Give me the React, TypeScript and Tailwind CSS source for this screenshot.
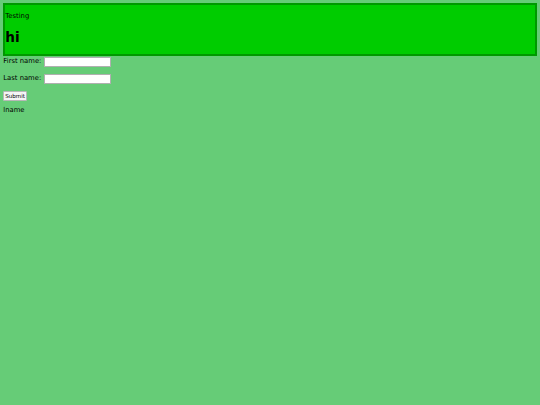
export default function App() {
  return (
    <div
      className="min-h-screen bg-[#66cc77] px-[3.33px] pt-[3.33px] text-[6.8px] leading-[7.8px] text-black"
      style={{ fontFamily: '"DejaVu Sans", sans-serif' }}
    >
      <div className="border-2 border-[#009900] bg-[#00cc00]">
        <p className="mt-[7.3px] mb-[6.67px]">Testing</p>
        <h1 className="my-[9.2px] text-[13.6px] font-bold leading-[15.5px]">hi</h1>
      </div>
      <form>
        <div className="mt-[0.5px] flex h-[10px] items-center gap-[3px]">
          <label htmlFor="fname">First name:</label>
          <input id="fname" type="text" className="h-[9.5px] w-[67px] border border-[#b0b0b0] bg-white" />
        </div>
        <div className="mt-[7px] flex h-[10px] items-center gap-[3px]">
          <label htmlFor="lname">Last name:</label>
          <input id="lname" type="text" className="h-[9.5px] w-[67px] border border-[#b0b0b0] bg-white" />
        </div>
        <div className="mt-[7.5px] flex h-[9.5px]">
          <button
            type="button"
            className="h-[9.5px] w-[23.5px] rounded-[1px] border border-[#b8b8b8] bg-[#f5f5f5] text-[5.56px] leading-[7px]"
          >
            Submit
          </button>
        </div>
        <p className="mt-[5.5px] leading-[8px]">lname</p>
      </form>
    </div>
  );
}
